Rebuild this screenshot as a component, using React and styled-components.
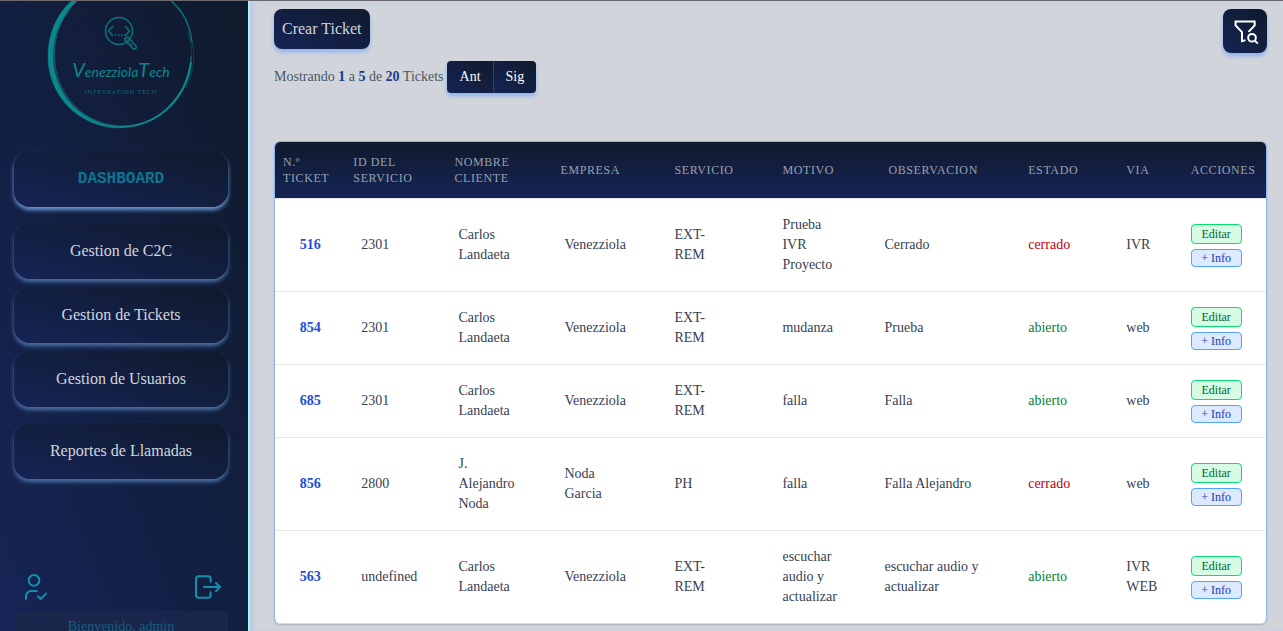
import React from "react";
import styled, { createGlobalStyle, css } from "styled-components";

const SERIF = '"Liberation Serif", "Times New Roman", serif';

const GlobalStyle = createGlobalStyle`
  *, *::before, *::after { box-sizing: border-box; }
  body { margin: 0; background: #d1d5db; font-family: ${SERIF}; font-size: 16px; line-height: 24px; }
  button { font-family: inherit; cursor: pointer; }
`;

const nightGradient = css`
  background: linear-gradient(to top right, #162456, #0f1a2b);
`;

const Page = styled.div`
  display: flex;
  height: 100vh;
  overflow: hidden;
  border-top: 1px solid #6b696e;
`;

const Sidebar = styled.aside`
  flex: none;
  width: 250px;
  display: flex;
  flex-direction: column;
  padding: 0 20px 0 14px;
  overflow: hidden;
  border-right: 2px solid #a2f4fd;
  background: linear-gradient(to top right, #162456, #0f1a2b);
`;

const Logo = styled.svg`
  flex: none;
  align-self: center;
  width: 150px;
  height: 150px;
  margin-top: -22px;
`;

const Nav = styled.nav`
  display: flex;
  flex-direction: column;
  padding-top: 22px;
`;

const NavGroup = styled.div`
  display: flex;
  flex-direction: column;
  gap: 8px;
  margin-bottom: 16px;
`;

const NavButton = styled.button`
  height: 56px;
  flex: none;
  border: 0;
  border-radius: 16px;
  ${nightGradient}
  color: ${(p) => (p.$active ? "#0e7490" : "#d1d5dc")};
  font-size: 16px;
  line-height: 24px;
  box-shadow: 0 3px 4px ${(p) => (p.$active ? "#6b9ad8" : "#4c72a6")};
  ${(p) =>
    p.$active &&
    css`
      font-family: "Liberation Mono", "Courier New", monospace;
      font-weight: 700;
    `}
`;

const Account = styled.div`
  display: flex;
  justify-content: space-between;
  padding: 76px 4px 8px;
`;

const IconButton = styled.button`
  display: flex;
  padding: 0;
  border: 0;
  background: none;
  color: #0e93ad;
`;

const Welcome = styled.p`
  margin: 0;
  padding: 4px;
  border-radius: 4px;
  background: #1b264c;
  color: #155e7f;
  font-size: 14px;
  line-height: 24px;
  text-align: center;
`;

const Main = styled.main`
  flex: 1;
  min-width: 0;
  padding: 8px 16px 6px 24px;
  box-shadow: inset 4px 0 6px -2px #b9c3e3;
`;

const Toolbar = styled.div`
  display: flex;
  justify-content: space-between;
  align-items: flex-start;
  height: 44px;
`;

const CreateButton = styled.button`
  height: 40px;
  padding: 0 8px;
  border: 0;
  border-radius: 8px;
  ${nightGradient}
  box-shadow: 0 3px 4px #8db1ee;
  color: #d1d5dc;
  font-size: 16px;
`;

const FilterButton = styled.button`
  display: grid;
  place-items: center;
  width: 44px;
  height: 44px;
  padding: 0;
  border: 0;
  border-radius: 8px;
  ${nightGradient}
  box-shadow: 0 3px 4px #8db1ee;
  color: #fff;
`;

const Pager = styled.div`
  display: flex;
  align-items: center;
  gap: 3px;
  margin: 8px 0 48px;
  color: #4a5565;
  font-size: 14px;
  line-height: 20px;

  strong { color: #1c398e; }
`;

const PagerButtons = styled.div`
  display: flex;
  border-radius: 4px;
  box-shadow: 0 3px 4px #8db1ee;
`;

const PagerButton = styled.button`
  height: 32px;
  padding: 0 12px 0 13px;
  border: 0;
  ${nightGradient}
  color: #fff;
  font-size: 14px;

  &:first-child { border-radius: 4px 0 0 4px; }
  &:last-child { border-radius: 0 4px 4px 0; padding-left: 12px; border-left: 1px solid #33415f; }
`;

const TableFrame = styled.div`
  overflow: hidden;
  border: 1px solid #8eb6f5;
  border-bottom-color: #d9dde3;
  border-radius: 6px;
  background: #fff;
  box-shadow: 0 1px 2px #a9adb5;
`;

const Table = styled.table`
  width: 100%;
  table-layout: fixed;
  border-collapse: separate;
  border-spacing: 0;
`;

const Head = styled.thead`
  background: linear-gradient(to top, #162456, #0f1a2b);
`;

const HeadCell = styled.th`
  width: ${(p) => p.$width}%;
  height: 56px;
  padding: 12px 0 12px 8px;
  color: #99a1af;
  font-size: 12px;
  font-weight: 400;
  line-height: 16px;
  letter-spacing: 0.05em;
  text-align: left;
  text-transform: uppercase;
`;

const Row = styled.tr`
  & > td { border-top: 1px solid #e5e7eb; }
`;

const Cell = styled.td`
  padding: 16px ${(p) => p.$right || 0}px 16px ${(p) => p.$left ?? 8}px;
  color: #364153;
  font-size: 14px;
  line-height: 20px;
`;

const NumberCell = styled(Cell)`
  color: #1d4ed8;
  font-weight: 700;
  text-align: center;
`;

const StatusCell = styled(Cell)`
  color: ${(p) => (p.$open ? "#008236" : "#c10007")};
`;

const ActionCell = styled(Cell)`
  padding-top: 8px;
  padding-bottom: 8px;
`;

const Actions = styled.div`
  display: flex;
  flex-direction: column;
  align-items: flex-start;
  gap: 5px;
`;

const ActionButton = styled.button`
  width: 51px;
  height: ${(p) => (p.$info ? 18 : 20)}px;
  padding: 0;
  border: 1px solid ${(p) => (p.$info ? "#51a2ff" : "#05df72")};
  border-radius: 4px;
  background: ${(p) => (p.$info ? "#dbeafe" : "#d6fce5")};
  color: ${(p) => (p.$info ? "#193cb8" : "#016630")};
  font-size: 12px;
  line-height: 16px;
`;

const LogoArt = () => (
  <Logo viewBox="0 0 150 150" fill="none" stroke="#0b888c" role="img" aria-label="VenezziolaTech">
    <path d="M75 149C33 149 2 117 2 77C2 34 35 3 75 2C56 5 43 11 31 22C15 37 7 56 7 77C7 116 38 147 75 147.500Z" fill="#0b888c" strokeWidth="0.500" />
    <path d="M22 33C5 54 5 88 16 109C28 131 47 146 75 147C117 148 145 114 145 77" strokeWidth="1" opacity="0.700" />
    <path d="M75 148C113 147 140 119 145 83" strokeWidth="2" />
    <path d="M117 15C136 29 143 42 146 63" strokeWidth="1.500" opacity="0.800" />
    <path d="M142 53C148 76 146 92 140 109M146 62C150 79 147 93 142 102" strokeWidth="1" opacity="0.350" />
    <g strokeWidth="1.500" opacity="0.800">
      <circle cx="73" cy="52" r="13.500" />
      <path d="M67 47L62.500 52L67 57M79 47L83.500 52L79 57" />
      <path d="M69 56h10" strokeDasharray="1.500 1.500" />
      <path d="M79 59.500L82 58L90 67Q91 71 87 69.500L79 61.500Z" />
      <path d="M80 60.500L87 67" strokeWidth="1" />
    </g>
    <g fill="#0b888c" stroke="none" fontFamily="Lato, sans-serif">
      <text x="75" y="98" textAnchor="middle" fontStyle="italic" fontSize="14">
        <tspan fontSize="20">V</tspan>enezziola<tspan fontSize="20">T</tspan>ech
      </text>
      <text x="75" y="115" textAnchor="middle" fontSize="6" letterSpacing="1" opacity="0.700">INTEGRATION TECH</text>
    </g>
  </Logo>
);

const Stroke = ({ children, width = 1.5, size = 32, ...rest }) => (
  <svg width={size} height={size} viewBox="0 0 24 24" fill="none" stroke="currentColor" strokeWidth={width} aria-hidden="true" {...rest}>
    {children}
  </svg>
);

const UserCheckIcon = () => (
  <Stroke strokeLinecap="round" strokeLinejoin="round">
    <path d="M8 7a4 4 0 1 0 8 0a4 4 0 0 0-8 0M6 21v-2a4 4 0 0 1 4-4h4M15 19l2 2l4-4" />
  </Stroke>
);

const LogoutIcon = () => (
  <Stroke strokeLinecap="round" strokeLinejoin="round">
    <path d="M14 8V6a2 2 0 0 0-2-2H5a2 2 0 0 0-2 2v12a2 2 0 0 0 2 2h7a2 2 0 0 0 2-2v-2M9 12h12l-3-3M18 15l3-3" />
  </Stroke>
);

const FilterSearchIcon = () => (
  <Stroke size={28} width={1.7}>
    <path d="M15 12.800L20.300 7.200V3.900H3.900V7.200L9.400 12.900V20.700L12.400 19.800" />
    <circle cx="18" cy="17.800" r="3.300" />
    <path d="M20.300 20.200L23 22.800" />
  </Stroke>
);

const columns = [
  ["N.º Ticket", 7.1],
  ["ID del servicio", 10.2],
  ["Nombre cliente", 10.7],
  ["Empresa", 11.5],
  ["Servicio", 10.9],
  ["Motivo", 10.7],
  ["Observacion", 14.1],
  ["Estado", 9.9],
  ["Via", 6.5],
  ["Acciones", 8.4],
];

const tickets = [
  { id: 516, service: "2301", client: "Carlos Landaeta", company: "Venezziola", type: "EXT-REM", reason: "Prueba IVR Proyecto", note: "Cerrado", status: "cerrado", via: "IVR" },
  { id: 854, service: "2301", client: "Carlos Landaeta", company: "Venezziola", type: "EXT-REM", reason: "mudanza", note: "Prueba", status: "abierto", via: "web" },
  { id: 685, service: "2301", client: "Carlos Landaeta", company: "Venezziola", type: "EXT-REM", reason: "falla", note: "Falla", status: "abierto", via: "web" },
  { id: 856, service: "2800", client: "J. Alejandro Noda", company: "Noda Garcia", type: "PH", reason: "falla", note: "Falla Alejandro", status: "cerrado", via: "web" },
  { id: 563, service: "undefined", client: "Carlos Landaeta", company: "Venezziola", type: "EXT-REM", reason: "escuchar audio y actualizar", note: "escuchar audio y actualizar", status: "abierto", via: "IVR WEB" },
];

export default function App() {
  return (
    <>
      <GlobalStyle />
      <Page>
        <Sidebar>
          <LogoArt />
          <Nav>
            <NavGroup>
              <NavButton $active>DASHBOARD</NavButton>
            </NavGroup>
            <NavGroup>
              <NavButton>Gestion de C2C</NavButton>
              <NavButton>Gestion de Tickets</NavButton>
              <NavButton>Gestion de Usuarios</NavButton>
            </NavGroup>
            <NavGroup>
              <NavButton>Reportes de Llamadas</NavButton>
            </NavGroup>
          </Nav>
          <Account>
            <IconButton aria-label="Perfil"><UserCheckIcon /></IconButton>
            <IconButton aria-label="Salir"><LogoutIcon /></IconButton>
          </Account>
          <Welcome>Bienvenido, admin</Welcome>
        </Sidebar>
        <Main>
          <Toolbar>
            <CreateButton>Crear Ticket</CreateButton>
            <FilterButton aria-label="Filtrar"><FilterSearchIcon /></FilterButton>
          </Toolbar>
          <Pager>
            <span>Mostrando <strong>1</strong> a <strong>5</strong> de <strong>20</strong> Tickets</span>
            <PagerButtons>
              <PagerButton>Ant</PagerButton>
              <PagerButton>Sig</PagerButton>
            </PagerButtons>
          </Pager>
          <TableFrame>
            <Table>
              <Head>
                <tr>
                  {columns.map(([label, width]) => (
                    <HeadCell key={label} scope="col" $width={width}>{label}</HeadCell>
                  ))}
                </tr>
              </Head>
              <tbody>
                {tickets.map((t) => (
                  <Row key={t.id}>
                    <NumberCell $left={0}>{t.id}</NumberCell>
                    <Cell $left={16}>{t.service}</Cell>
                    <Cell $left={12} $right={32}>{t.client}</Cell>
                    <Cell $left={12} $right={36}>{t.company}</Cell>
                    <Cell $right={48}>{t.type}</Cell>
                    <Cell $right={40}>{t.reason}</Cell>
                    <Cell $left={4} $right={16}>{t.note}</Cell>
                    <StatusCell $open={t.status === "abierto"}>{t.status}</StatusCell>
                    <Cell>{t.via}</Cell>
                    <ActionCell>
                      <Actions>
                        <ActionButton>Editar</ActionButton>
                        <ActionButton $info>+ Info</ActionButton>
                      </Actions>
                    </ActionCell>
                  </Row>
                ))}
              </tbody>
            </Table>
          </TableFrame>
        </Main>
      </Page>
    </>
  );
}
